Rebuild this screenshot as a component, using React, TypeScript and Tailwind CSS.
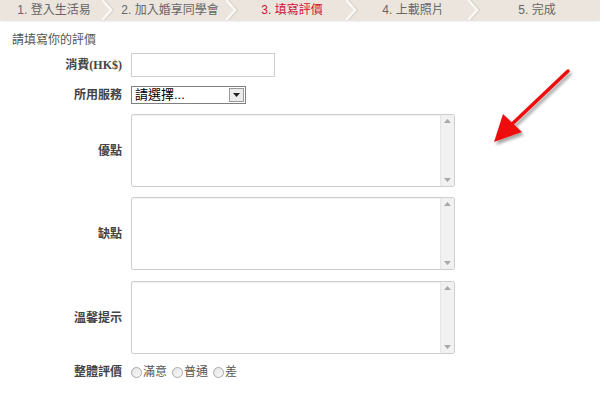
import React from "react";

const steps = [
  { label: "1. 登入生活易", w: "w-[108px]", active: false },
  { label: "2. 加入婚享同學會", w: "w-[124px]", active: false },
  { label: "3. 填寫評價", w: "w-[120px]", active: true },
  { label: "4. 上載照片", w: "w-[122px]", active: false },
  { label: "5. 完成", w: "flex-1", active: false },
];

function Chevron() {
  return (
    <svg width="12" height="20" viewBox="0 0 12 20" className="shrink-0 -mx-[6px]">
      <polyline points="1,0 10,10 1,20" fill="none" stroke="#ddd6cc" strokeWidth="4" />
      <polyline points="0,0 9,10 0,20" fill="none" stroke="#fbf9f6" strokeWidth="2.5" />
    </svg>
  );
}

function StepBar() {
  return (
    <div className="flex h-[20px] items-center bg-[#ebe5dd] shadow-[0_1px_2px_rgba(0,0,0,0.15)]">
      {steps.map((s, i) => (
        <React.Fragment key={s.label}>
          {i > 0 && <Chevron />}
          <div
            className={`${s.w} text-center text-[12px] leading-[20px] ${s.active ? "text-[#d0103a]" : "text-[#666]"}`}
          >
            {s.label}
          </div>
        </React.Fragment>
      ))}
    </div>
  );
}

function Row({ label, children, className = "" }: { label: React.ReactNode; children: React.ReactNode; className?: string }) {
  return (
    <div className={`flex items-center ${className}`}>
      <div className="w-[122px] text-right text-[12px] font-bold text-[#444]">{label}</div>
      <div className="ml-[9px]">{children}</div>
    </div>
  );
}

function ScrollArea() {
  return (
    <div className="flex h-[73px] w-[324px] rounded-[2px] border border-[#cfcfcf] bg-white shadow-[inset_0_1px_1px_rgba(0,0,0,0.06)]">
      <textarea className="flex-1 resize-none bg-transparent outline-none" />
      <div className="flex w-[14px] flex-col items-center justify-between border-l border-[#e6e6e6] bg-[#f1f1f1] py-[4px]">
        <svg width="7" height="4" viewBox="0 0 7 4">
          <polygon points="0,4 3.5,0 7,4" fill="#a8a8a8" />
        </svg>
        <svg width="7" height="4" viewBox="0 0 7 4">
          <polygon points="0,0 7,0 3.5,4" fill="#a8a8a8" />
        </svg>
      </div>
    </div>
  );
}

function Radio({ label }: { label: string }) {
  return (
    <label className="flex items-center gap-[1px] text-[12px] text-[#555]">
      <span className="inline-block h-[11px] w-[11px] rounded-full border border-[#a9a9a9] bg-gradient-to-br from-[#e4e4e4] to-[#fafafa]" />
      {label}
    </label>
  );
}

export default function App() {
  return (
    <div
      className="relative h-[398px] w-[600px] overflow-hidden bg-white"
      style={{ fontFamily: '"Liberation Sans", "Noto Sans CJK TC", sans-serif' }}
    >
      <StepBar />
      <div className="mt-[12px] pl-[12px] text-[12px] leading-[16px] text-[#555]">請填寫你的評價</div>

      <Row
        label={
          <>
            消費<span className="font-['Liberation_Serif',serif]">(HK$)</span>
          </>
        }
        className="mt-[5px]"
      >
        <input className="h-[24px] w-[144px] border border-[#cfcfcf] bg-white outline-none" />
      </Row>

      <Row label="所用服務" className="mt-[9px]">
        <div className="flex h-[18px] w-[115px] items-center border border-[#7f7f7f] bg-white">
          <span className="flex-1 pl-[3px] text-[13px] leading-[16px] text-black">請選擇...</span>
          <span className="mr-[1px] flex h-[14px] w-[15px] items-center justify-center border border-[#9a9a9a] bg-[#ececec]">
            <svg width="7" height="4" viewBox="0 0 7 4">
              <polygon points="0,0 7,0 3.5,4" fill="#222" />
            </svg>
          </span>
        </div>
      </Row>

      <Row label="優點" className="mt-[10px]">
        <ScrollArea />
      </Row>
      <Row label="缺點" className="mt-[10px]">
        <ScrollArea />
      </Row>
      <Row label="溫馨提示" className="mt-[11px]">
        <ScrollArea />
      </Row>

      <Row label="整體評價" className="mt-[9px]">
        <div className="flex items-center gap-[5px]">
          <Radio label="滿意" />
          <Radio label="普通" />
          <Radio label="差" />
        </div>
      </Row>

      <svg
        className="absolute left-[490px] top-[64px]"
        width="90"
        height="84"
        viewBox="0 0 90 84"
      >
        <defs>
          <filter id="sh" x="-20%" y="-20%" width="150%" height="150%">
            <feDropShadow dx="2" dy="3" stdDeviation="1.5" floodColor="#000" floodOpacity="0.35" />
          </filter>
        </defs>
        <g filter="url(#sh)">
          <line x1="78" y1="7" x2="20" y2="62" stroke="#ee1111" strokeWidth="3.5" strokeLinecap="round" />
          <polygon points="4,78 13,50 32,68" fill="#ee1111" />
        </g>
      </svg>
    </div>
  );
}
